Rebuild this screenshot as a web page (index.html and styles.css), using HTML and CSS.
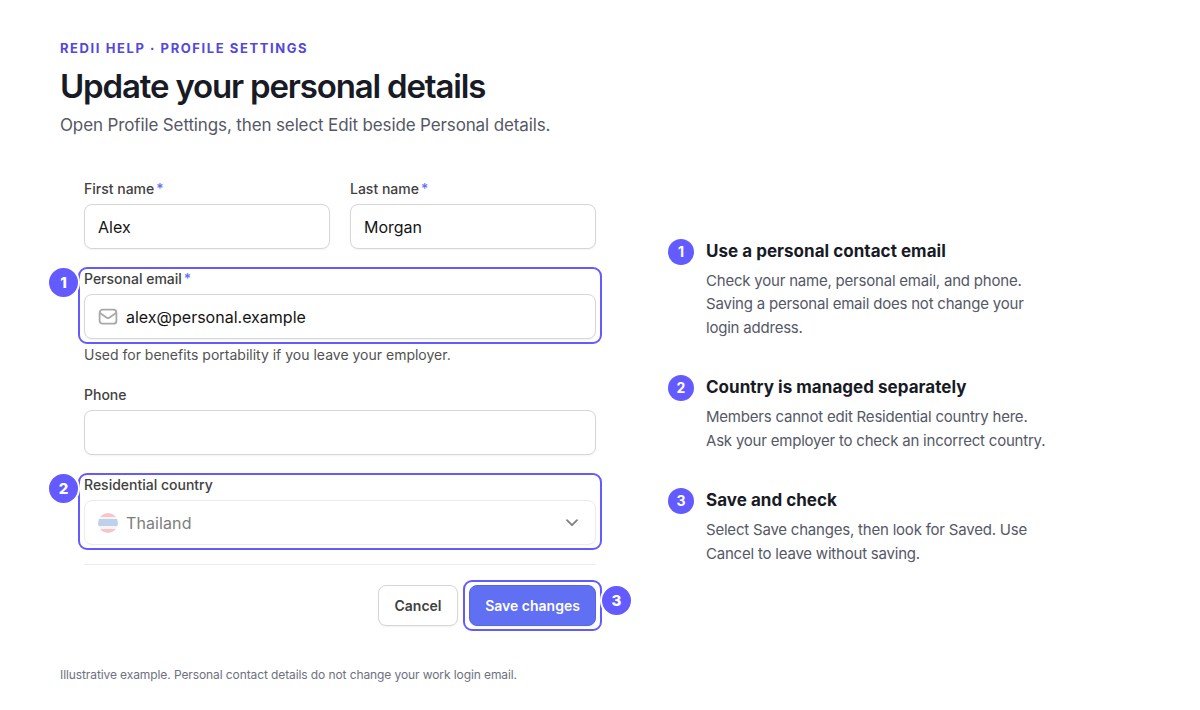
FILE: index.html
```html
<!DOCTYPE html>
<html lang="en">
  <head>
    <meta charset="UTF-8" />
    <meta name="viewport" content="width=device-width, initial-scale=1.0" />
    <title>Update your personal details</title>
    <link rel="stylesheet" href="styles.css">
  </head>
  <body>
    <main class="page">
      <header class="header">
        <p class="eyebrow">REDII HELP · PROFILE SETTINGS</p>
        <h1>Update your personal details</h1>
        <p class="intro">Open Profile Settings, then select Edit beside Personal details.</p>
      </header>

      <div class="content">
        <form class="form">
          <div class="row">
            <div class="field">
              <label for="firstName">First name<span class="required">*</span></label>
              <input class="control" type="text" id="firstName" value="Alex" />
            </div>
            <div class="field">
              <label for="lastName">Last name<span class="required">*</span></label>
              <input class="control" type="text" id="lastName" value="Morgan" />
            </div>
          </div>

          <div class="field">
            <div class="field target">
              <label for="email">Personal email<span class="required">*</span></label>
              <div class="control">
                <svg width="20" height="20" viewBox="0 0 20 20" fill="none" stroke="#a8a8a8" stroke-width="1.8" stroke-linecap="round" stroke-linejoin="round">
                  <rect x="1.6" y="2.7" width="16.8" height="14" rx="3" />
                  <path d="M2 6l6.4 4.5a2.8 2.8 0 0 0 3.2 0L18 6" />
                </svg>
                <input class="bare" type="text" id="email" value="alex@personal.example" />
              </div>
              <span class="outline"></span>
              <span class="marker">1</span>
            </div>
            <p class="hint">Used for benefits portability if you leave your employer.</p>
          </div>

          <div class="field">
            <label for="phone">Phone</label>
            <input class="control" type="text" id="phone" />
          </div>

          <div class="field target">
            <label>Residential country</label>
            <div class="control disabled">
              <span class="flag"></span>
              <span class="country">Thailand</span>
              <svg width="20" height="20" viewBox="0 0 20 20" fill="none" stroke="#808080" stroke-width="1.8" stroke-linecap="round" stroke-linejoin="round">
                <path d="M5 7.2l5 5 5-5" />
              </svg>
            </div>
            <span class="outline"></span>
            <span class="marker">2</span>
          </div>

          <div class="actions">
            <button class="btn" type="button">Cancel</button>
            <div class="target save">
              <button class="btn primary" type="button">Save changes</button>
              <span class="outline"></span>
              <span class="marker">3</span>
            </div>
          </div>
        </form>

        <ol class="steps">
          <li class="step">
            <span class="number">1</span>
            <div>
              <h2>Use a personal contact email</h2>
              <p>Check your name, personal email, and phone.<br>Saving a personal email does not change your<br>login address.</p>
            </div>
          </li>
          <li class="step">
            <span class="number">2</span>
            <div>
              <h2>Country is managed separately</h2>
              <p>Members cannot edit Residential country here.<br>Ask your employer to check an incorrect country.</p>
            </div>
          </li>
          <li class="step">
            <span class="number">3</span>
            <div>
              <h2>Save and check</h2>
              <p>Select Save changes, then look for Saved. Use<br>Cancel to leave without saving.</p>
            </div>
          </li>
        </ol>
      </div>

      <footer class="footnote">Illustrative example. Personal contact details do not change your work login email.</footer>
    </main>
  </body>
</html>
```
FILE: styles.css
```css
* {
  box-sizing: border-box;
}

body {
  margin: 0;
  background: white;
  color: #181b25;
  font-family: Inter, "Liberation Sans", sans-serif;
}

h1,
h2,
p,
ol {
  margin: 0;
  padding: 0;
}

.page {
  height: 710px;
  padding: 40px 60px 0;
}

.header {
  height: 138px;
}

.eyebrow {
  color: #5448dc;
  font-size: 13px;
  font-weight: 700;
  line-height: 16px;
  letter-spacing: 1.58px;
}

h1 {
  margin-top: 9px;
  font-size: 33px;
  font-weight: 600;
  line-height: 42px;
  letter-spacing: -1.17px;
}

.intro {
  margin-top: 7px;
  color: #555866;
  font-size: 17px;
  line-height: 22px;
  letter-spacing: -0.13px;
}

.content {
  display: flex;
  gap: 72px;
  padding-left: 24px;
}

/* Form */
.form {
  display: flex;
  flex-direction: column;
  gap: 20px;
  width: 512px;
}

.row {
  display: grid;
  grid-template-columns: 1fr 1fr;
  gap: 20px;
}

.field {
  display: flex;
  flex-direction: column;
  gap: 6px;
  min-width: 0;
}

label {
  height: 20px;
  padding-top: 1px;
  color: #414141;
  font-size: 14px;
  font-weight: 500;
  line-height: 20px;
}

.required {
  margin-left: 2px;
  color: #6172f3;
}

.control {
  display: flex;
  align-items: center;
  gap: 8px;
  width: 100%;
  height: 45px;
  margin-bottom: -1px;
  padding: 0 13px;
  border: 1px solid #d6d6d6;
  border-radius: 8px;
  background: white;
  box-shadow: 0 1px 2px rgba(10, 13, 18, 0.05);
  color: #141414;
  font-family: inherit;
  font-size: 16px;
}

.bare {
  flex: 1;
  padding: 0;
  border: none;
  color: inherit;
  font: inherit;
}

.hint {
  padding-top: 1px;
  color: #525252;
  font-size: 14px;
  line-height: 19px;
}

.disabled {
  border-color: #ebebeb;
  box-shadow: 0 1px 2px rgba(10, 13, 18, 0.02);
  color: #7d7d7d;
}

.country {
  flex: 1;
  letter-spacing: 0.1px;
}

.flag {
  width: 20px;
  height: 20px;
  border-radius: 50%;
  background: linear-gradient(#f9c3ca 0 4px, #f5f5f6 4px 6.5px, #bdd0ec 6.5px 13.5px, #f5f5f6 13.5px 16px, #f9c3ca 16px);
}

.actions {
  display: flex;
  justify-content: flex-end;
  gap: 11px;
  padding-top: 20px;
  border-top: 1px solid #ededed;
}

.btn {
  height: 41px;
  width: 80px;
  padding: 0;
  border: 1px solid #d6d6d6;
  border-radius: 8px;
  background: white;
  box-shadow: 0 1px 2px rgba(10, 13, 18, 0.06);
  color: #414141;
  font-family: inherit;
  font-size: 14px;
  font-weight: 600;
}

.primary {
  display: block;
  width: 127px;
  border-color: #5868dc;
  background: #616ff3;
  color: white;
}

/* Numbered callouts over the form */
.target {
  position: relative;
}

.outline {
  position: absolute;
  inset: -1px -6px -6px;
  border: 2px solid #635bff;
  border-radius: 9px;
  pointer-events: none;
}

.save .outline {
  inset: -5px -6px;
}

.marker {
  position: absolute;
  top: -2px;
  left: -37px;
  width: 33px;
  height: 33px;
  border: 2px solid white;
  border-radius: 50%;
  background: #635bff;
  color: white;
  font-size: 15px;
  font-weight: 800;
  line-height: 29px;
  text-align: center;
}

.save .marker {
  top: -1px;
  right: -37px;
  left: auto;
}

/* Steps */
.steps {
  display: flex;
  flex-direction: column;
  gap: 36px;
  padding-top: 60.5px;
  list-style: none;
}

.step {
  display: flex;
  gap: 12px;
}

.number {
  width: 26px;
  height: 26px;
  border-radius: 50%;
  background: #635bff;
  color: white;
  font-size: 14px;
  font-weight: 700;
  line-height: 26px;
  text-align: center;
}

h2 {
  font-size: 17px;
  font-weight: 700;
  line-height: 24px;
  letter-spacing: 0.03px;
}

.step p {
  margin-top: 6px;
  color: #555866;
  font-size: 15px;
  line-height: 23.6px;
  letter-spacing: -0.21px;
  white-space: nowrap;
}

.footnote {
  margin-top: 41px;
  color: #6d717e;
  font-size: 12px;
  line-height: 16px;
  letter-spacing: -0.095px;
}
```
